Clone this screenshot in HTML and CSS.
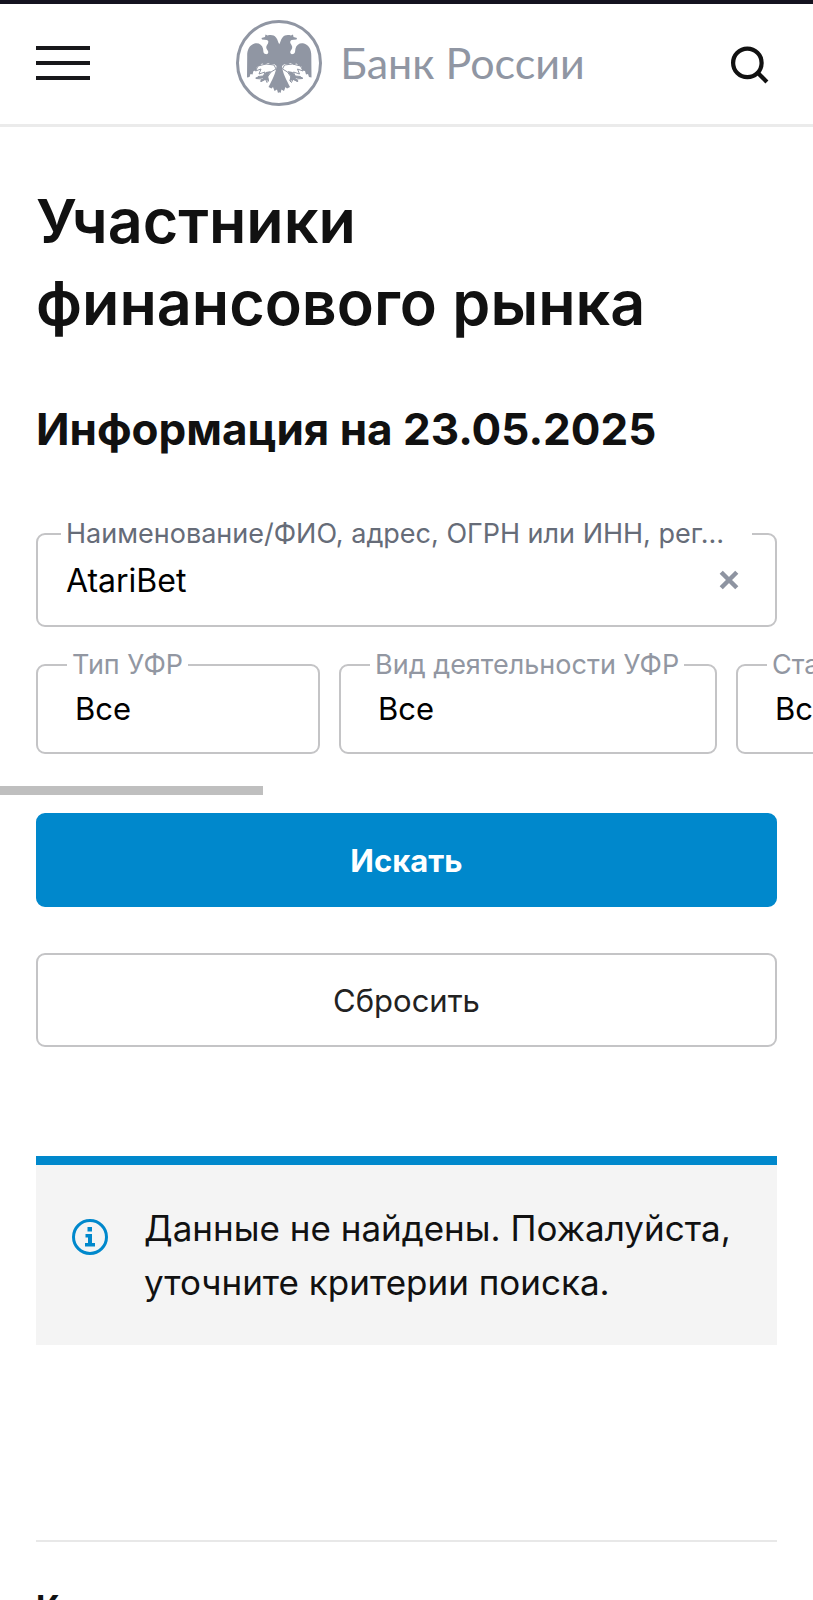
FILE: index.html
```html
<!DOCTYPE html>
<html lang="ru">
<head>
<meta charset="utf-8">
<meta name="viewport" content="width=device-width, initial-scale=1">
<title>Участники финансового рынка | Банк России</title>
<link rel="stylesheet" href="styles.css">
</head>
<body>
<header class="header">
  <button class="icon-button" type="button" aria-label="Меню">
    <svg class="menu-icon" viewBox="0 0 54 36"><path d="M0 3h54M0 18h54M0 33h54" stroke="#17171a" stroke-width="4"/></svg>
  </button>
  <a class="logo" href="#">
    <svg class="emblem" viewBox="0 0 86 86" aria-hidden="true">
      <circle cx="43" cy="43" r="41.5" fill="none" stroke="#9096a3" stroke-width="3"/>
      <g id="eagle-half" fill="#9096a3">
        <path d="M43.500 24.500C42 22.500 42 20 40 17.500C38 15 35 14.500 31.500 15.500L29.500 14.500L29 17L25.500 18L26 19.500L31 20C33 21 32.500 23 31 25C29.500 27.500 30.500 29 32 31C33 33.500 31 34.500 29.500 34C27 33.500 27.500 31 27 28.500C26 24.500 22.500 22.500 18.500 23.500C13.500 25 11 30 11.200 36L11 57.500L13.500 57L14.500 54L16.500 54.500L17.500 51L20 50.500L21 46.500L24 45.500L26 43.500L29 44.500L32 43L35 44.500L38 44L40.500 46C40 53 36 60 32.500 67L35.500 68.500L37 67L38.500 71L41 69.500L42 73L43.500 72Z"/>
        <path d="M22 46L19.500 51L25 49L23 54L29 52L27.500 56L22 56.500L20 58.500L26 59L25 61.500L29.500 59L31 62.500L32.500 61L31.500 57L35 52L40 49L38 45L30 44Z" fill="none" stroke="#9096a3" stroke-width="1"/>
        <path d="M30 52L35 51L32 56L33 61L29 60L25 62L24 61L27 58L20 59L19.500 57.500L27 56Z"/>
      </g>
      <use href="#eagle-half" transform="matrix(-1 0 0 1 86.500 0)"/>
    </svg>
    <span class="logo-text">Банк России</span>
  </a>
  <button class="icon-button" type="button" aria-label="Поиск">
    <svg class="search-icon" viewBox="0 0 36 36"><circle cx="15.500" cy="16" r="13.500" fill="none" stroke="#111" stroke-width="4"/><path d="M25 25l9 9" stroke="#111" stroke-width="4"/></svg>
  </button>
</header>
<main class="content">
  <h1 class="title">Участники финансового рынка</h1>
  <h2 class="subtitle">Информация на 23.05.2025</h2>
  <form class="search-form">
    <fieldset class="field">
      <legend class="field-legend"><label class="field-label" for="query">Наименование/ФИО, адрес, ОГРН или ИНН, рег. номер</label></legend>
      <div class="field-row">
        <input class="field-input" id="query" type="text" value="AtariBet">
        <button class="clear" type="button" aria-label="Очистить"><svg class="clear-icon" viewBox="0 0 18 18"><path d="M2 2l14 14M16 2L2 16" stroke="#8e94a1" stroke-width="4"/></svg></button>
      </div>
    </fieldset>
    <div class="filters">
      <fieldset class="filter filter-type">
        <legend class="filter-legend"><label for="type">Тип УФР</label></legend>
        <select class="filter-select" id="type"><option>Все</option></select>
      </fieldset>
      <fieldset class="filter filter-activity">
        <legend class="filter-legend"><label for="activity">Вид деятельности УФР</label></legend>
        <select class="filter-select" id="activity"><option>Все</option></select>
      </fieldset>
      <fieldset class="filter filter-status">
        <legend class="filter-legend"><label for="status">Статус</label></legend>
        <select class="filter-select" id="status"><option>Все</option></select>
      </fieldset>
    </div>
    <div class="scroll-track"><div class="scroll-thumb"></div></div>
    <div class="actions">
      <button class="button button-primary" type="button">Искать</button>
      <button class="button" type="reset">Сбросить</button>
    </div>
  </form>
  <div class="notice" role="status">
    <svg class="info-icon" viewBox="0 0 36 36" aria-hidden="true"><circle cx="18" cy="18" r="16.5" fill="none" stroke="#0088cc" stroke-width="3"/><path d="M15.500 8h4.500v4.500h-4.500zM13.500 15h6.500v9h3v3.500h-10v-3.500h3v-5.500h-2.500z" fill="#0088cc"/></svg>
    <p class="notice-text">Данные не найдены. Пожалуйста, уточните критерии поиска.</p>
  </div>
  <section class="more">
    <h3 class="more-title">Комментарии к реестрам</h3>
  </section>
</main>
</body>
</html>
```
FILE: styles.css
```css
* {
  box-sizing: border-box;
}

html,
body {
  height: 100%;
}

body {
  margin: 0;
  overflow: hidden;
  border-top: 4px solid #14121f;
  background: #fff;
  color: #111;
  font-family: Inter, "Open Sans", sans-serif;
}

button,
input,
select {
  padding: 0;
  border: 0;
  background: none;
  color: #000;
  font: inherit;
}

.header {
  display: flex;
  align-items: center;
  justify-content: space-between;
  height: 123px;
  padding: 0 44px 2px 36px;
  border-bottom: 3px solid #ebebeb;
}

.icon-button {
  display: flex;
}

.menu-icon {
  width: 54px;
  height: 36px;
}

.search-icon {
  width: 38px;
  height: 38px;
  margin-top: 4px;
}

.logo {
  display: flex;
  align-items: center;
  gap: 18px;
  color: #9096a3;
  text-decoration: none;
}

.emblem {
  width: 86px;
  height: 86px;
}

.logo-text {
  font-family: Lato, "Open Sans", sans-serif;
  font-size: 43px;
  line-height: 52px;
}

.content {
  padding: 0 36px;
}

.title {
  max-width: 660px;
  margin: 53px 0 0;
  font-size: 61px;
  font-weight: 600;
  line-height: 82px;
}

.subtitle {
  margin: 55px 0 0;
  font-size: 44px;
  font-weight: 700;
  line-height: 60px;
}

.search-form {
  margin-top: 59px;
}

.field,
.filter {
  min-width: 0;
  margin: 0;
  padding: 0;
  border: 2px solid #c4c4c6;
  border-radius: 9px;
}

.field {
  height: 109px;
}

.field-legend {
  max-width: calc(100% - 46px);
  margin-left: 23px;
  padding: 0 26px 0 5px;
  color: #666c78;
  font-size: 27px;
  line-height: 32px;
}

.field-label {
  display: block;
  overflow: hidden;
  text-overflow: ellipsis;
  white-space: nowrap;
}

.field-row {
  display: flex;
  align-items: center;
  padding: 7px 36px 0 28px;
}

.field-input {
  flex: 1;
  min-width: 0;
  height: 46px;
  outline: 0;
  font-size: 32px;
}

.clear {
  display: flex;
}

.clear-icon {
  width: 20px;
  height: 20px;
}

.filters {
  display: flex;
  gap: 19px;
  margin: 22px -36px 0;
  padding: 0 36px;
  overflow: hidden;
}

.filter {
  flex: none;
  height: 105px;
}

.filter-type {
  width: 284px;
}

.filter-activity {
  width: 378px;
}

.filter-status {
  width: 284px;
}

.filter-legend {
  margin-left: 29px;
  padding: 0 5px;
  color: #9297a2;
  font-size: 27px;
  line-height: 32px;
}

.filter-select {
  display: block;
  width: 100%;
  height: 46px;
  margin-top: 4px;
  padding-left: 37px;
  appearance: none;
  font-size: 31px;
}

.scroll-track {
  margin: 32px -36px 0;
}

.scroll-thumb {
  width: 263px;
  height: 9px;
  background: #bfbfbf;
}

.actions {
  display: grid;
  gap: 46px;
  margin-top: 18px;
}

.button {
  height: 94px;
  border: 2px solid #c4c4c6;
  border-radius: 9px;
  color: #222;
  font-size: 31px;
}

.button-primary {
  border-color: #0088cc;
  background: #0088cc;
  color: #fff;
  font-weight: 700;
}

.notice {
  display: flex;
  gap: 36px;
  margin-top: 109px;
  padding: 36px;
  border-top: 9px solid #0088cc;
  background: #f4f4f4;
}

.info-icon {
  flex: none;
  width: 36px;
  height: 36px;
  margin-top: 18px;
}

.notice-text {
  margin: 0;
  font-size: 35px;
  line-height: 54px;
}

.more {
  margin-top: 195px;
  border-top: 2px solid #e8e8e8;
}

.more-title {
  margin: 43px 0 0;
  font-size: 33px;
  line-height: 44px;
}
```
